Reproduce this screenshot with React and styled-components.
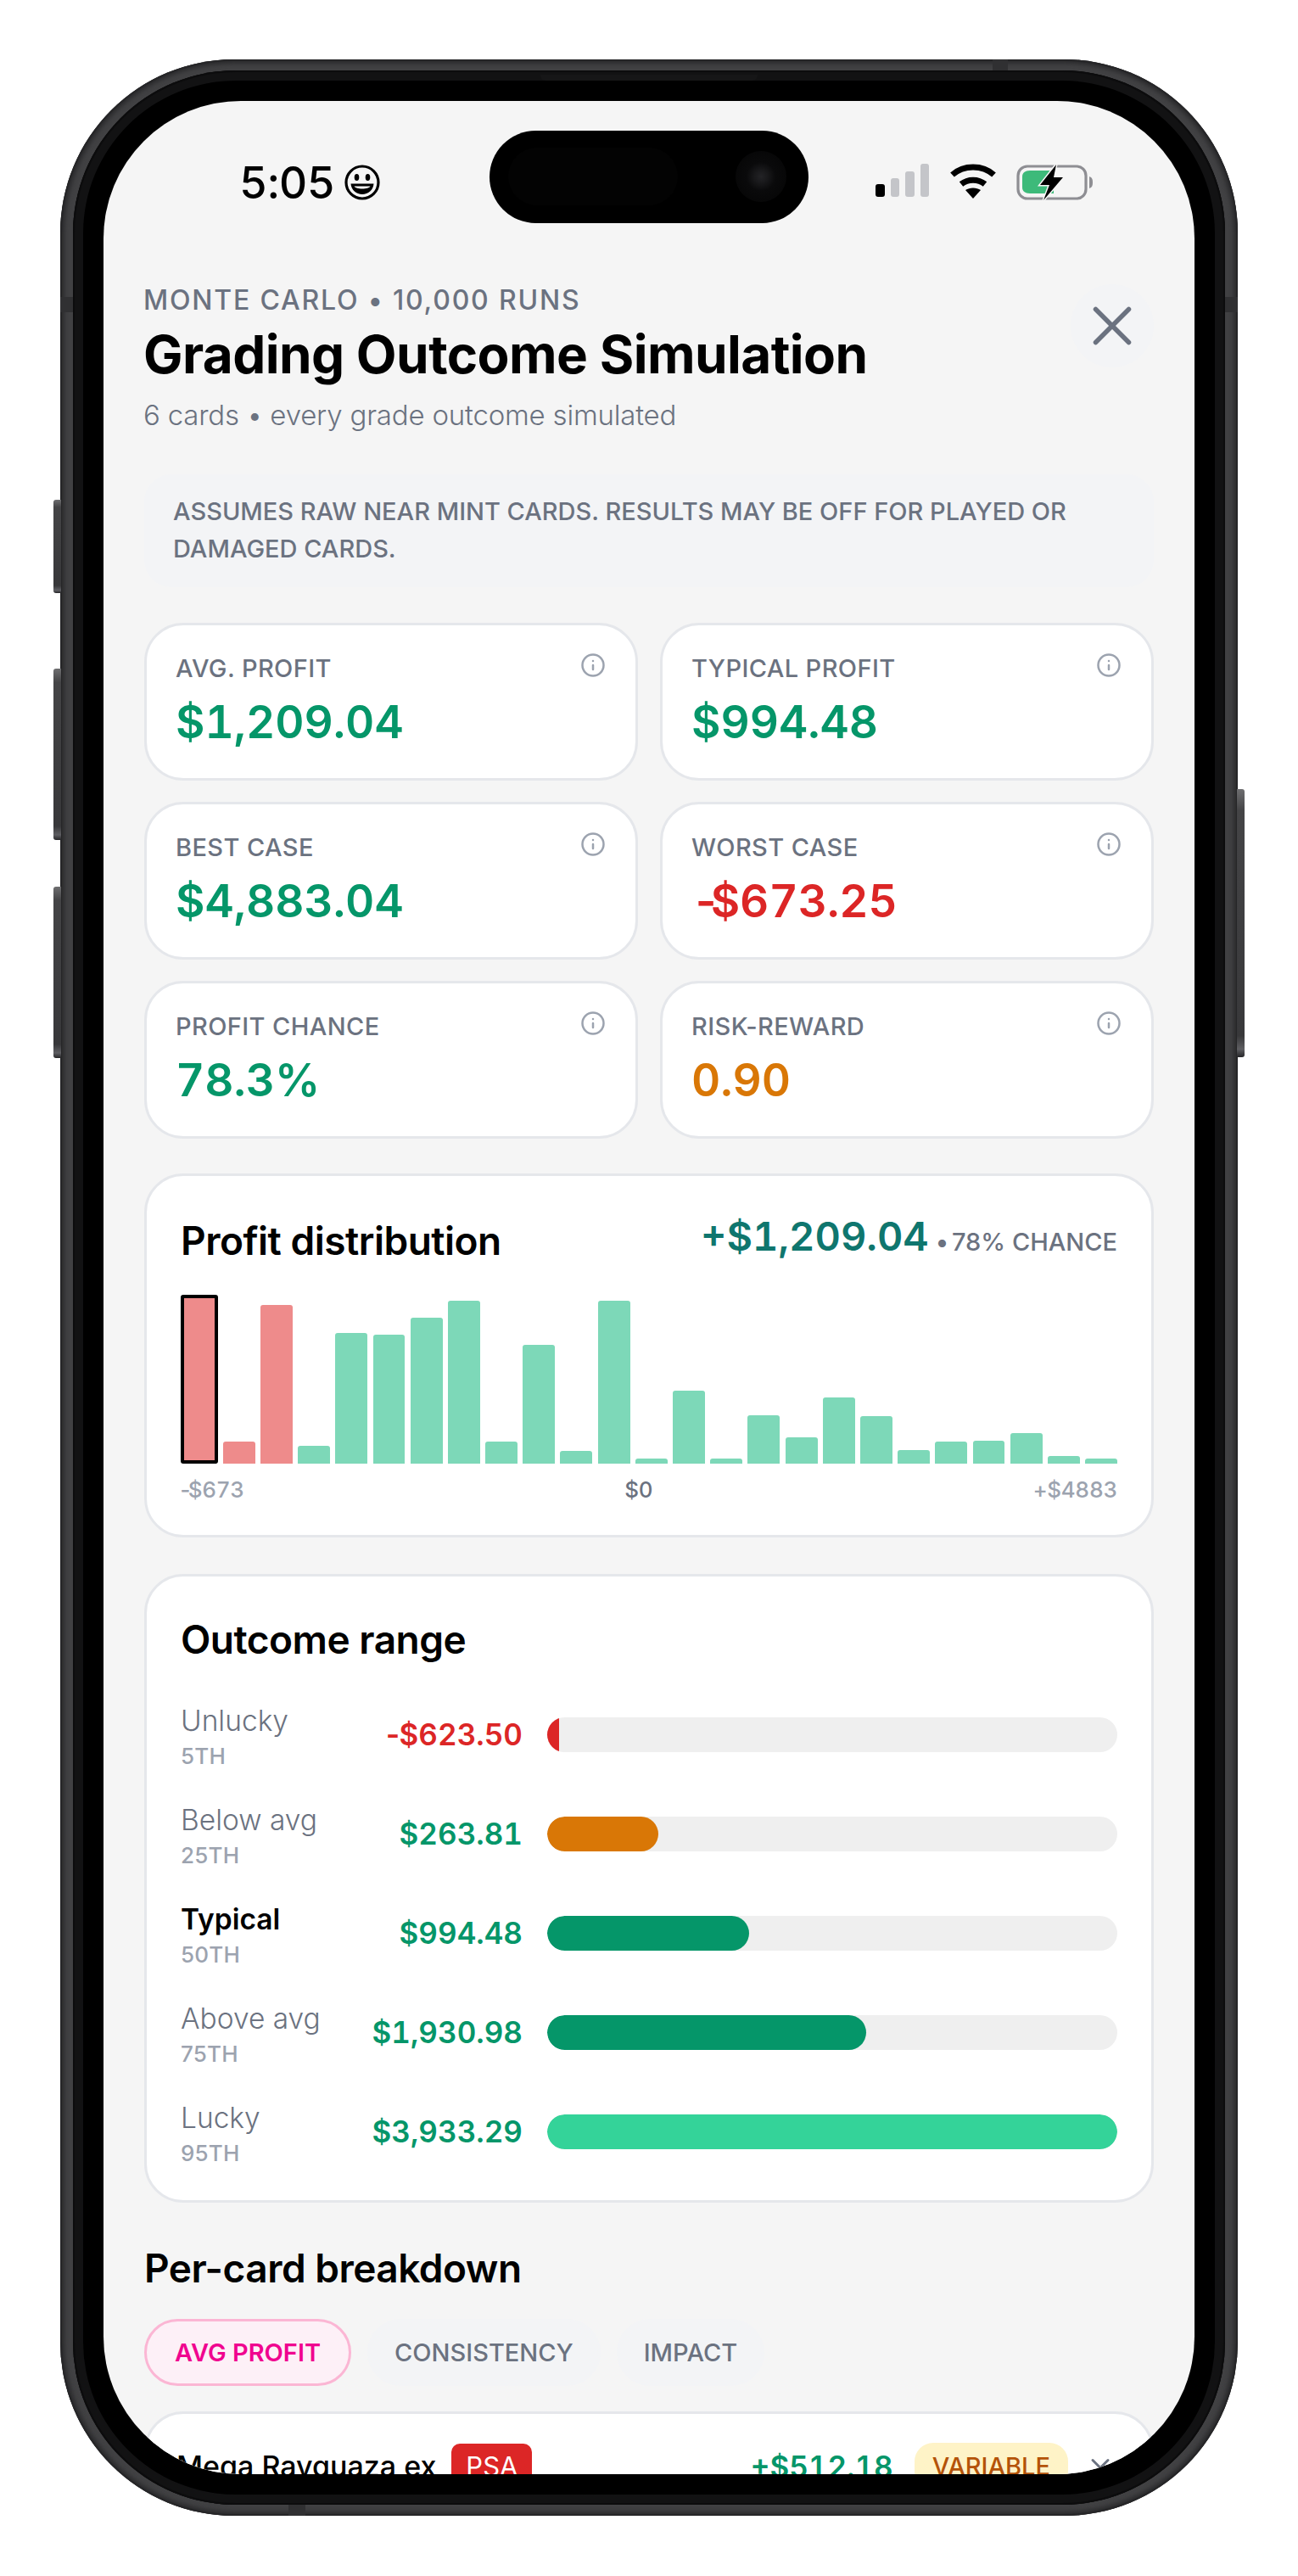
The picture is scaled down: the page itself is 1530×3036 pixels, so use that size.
import React from "react";
import styled, { createGlobalStyle } from "styled-components";
import { X, Info, ChevronDown } from "lucide-react";

const GlobalStyle = createGlobalStyle`
  html, body {
    margin: 0;
    background: #ffffff;
  }
  * {
    box-sizing: border-box;
  }
`

const Page = styled.div`
  width: 1530px;
  height: 3036px;
  padding: 70px 0 0 71px;
  background: #ffffff;
  font-family: Inter, "Liberation Sans", sans-serif;
  overflow: hidden;
`
const Phone = styled.div`
  position: relative;
  width: 1388px;
  height: 2895px;
  padding: 13px 15px;
  border-radius: 205px;
  background: #414143;
  box-shadow: inset 0 0 0 2px #262628, inset 0 0 5px 5px #2b2b2d;
`
const Bezel = styled.div`
  width: 100%;
  height: 100%;
  padding: 36px;
  border-radius: 192px;
  background: #000000;
  box-shadow: inset 0 0 0 2px #0c0c0d, inset 0 0 0 12px #121213;
`
const Band = styled.span`
  position: absolute;
  background: #303032;
  ${props => props.side === "top" && `top: 0; left: 1099px; width: 18px; height: 13px;`}
  ${props => props.side === "bottom" && `bottom: 0; left: 269px; width: 20px; height: 13px;`}
  ${props => props.side === "left" && `left: 0; top: 280px; width: 15px; height: 18px;`}
  ${props => props.side === "right" && `right: 0; top: 280px; width: 15px; height: 18px;`}
`
const Speaker = styled.span`
  position: absolute;
  top: 18px;
  left: 566px;
  width: 256px;
  height: 7px;
  border-radius: 0 0 6px 6px;
  background: #161617;
`
const SideButton = styled.span`
  position: absolute;
  top: ${props => props.top}px;
  height: ${props => props.height}px;
  width: 9px;
  background: linear-gradient(180deg, #6e6e70 0, #444446 8%, #38383a 92%, #5e5e62 97%, #262628 100%);
  ${props => props.right ? `right: -8px; border-radius: 0 3px 3px 0;` : `left: -8px; border-radius: 3px 0 0 3px;`}
`
const Screen = styled.div`
  width: 100%;
  height: 100%;
  border-radius: 162px;
  background: #f5f5f5;
  overflow: hidden;
`
const StatusBar = styled.div`
  display: grid;
  grid-template-columns: 455px 376px 1fr;
  padding-top: 35px;
  height: 144px;
`
const StatusLeft = styled.div`
  display: flex;
  align-items: center;
  gap: 11px;
  padding-left: 160px;
  height: 109px;
  padding-top: 13px;
`
const Time = styled.span`
  font-size: 52px;
  font-weight: 500;
  font-variant-numeric: tabular-nums;
  letter-spacing: -0.5px;
  color: #000000;
`
const Island = styled.div`
  position: relative;
  height: 109px;
  border-radius: 55px;
  background: #000000;
`
const IslandInner = styled.span`
  position: absolute;
  top: 20px;
  left: 22px;
  width: 200px;
  height: 68px;
  border-radius: 34px;
  background: #030303;
`
const Camera = styled.span`
  position: absolute;
  top: 24px;
  right: 26px;
  width: 60px;
  height: 60px;
  border-radius: 50%;
  background: radial-gradient(circle, #232326 0, #19191b 18%, #0a0a0b 40%, #040404 100%);
`
const StatusRight = styled.div`
  display: flex;
  align-items: flex-start;
  justify-content: flex-end;
  padding: 39px 119px 0 0;
  gap: 23px;
`
const Content = styled.div`
  padding: 0 48px 0;
`
const Header = styled.div`
  display: flex;
  justify-content: space-between;
  align-items: flex-start;
  margin-top: 72px;
`
const Eyebrow = styled.div`
  margin-left: -1px;
  font-size: 32px;
  line-height: 38px;
  font-weight: 500;
  letter-spacing: 1.8px;
  color: #6b7280;
`
const Title = styled.h1`
  margin: 7px 0 0 -1px;
  font-size: 62px;
  line-height: 75px;
  font-weight: 700;
  letter-spacing: -0.55px;
  color: #000000;
`
const Subtitle = styled.div`
  margin: 14px 0 0 -1px;
  font-size: 33px;
  line-height: 40px;
  font-weight: 300;
  letter-spacing: -0.2px;
  color: #6b7280;
`
const CloseButton = styled.button`
  display: flex;
  align-items: center;
  justify-content: center;
  width: 98px;
  height: 98px;
  padding: 0;
  border: 0;
  border-radius: 50%;
  background: #f3f4f6;
  color: #6b7280;
`
const Banner = styled.div`
  margin-top: 50px;
  padding: 22px 34px 23px;
  border-radius: 32px;
  background: #f3f4f6;
  font-size: 29px;
  line-height: 44px;
  font-weight: 500;
  color: #6b7280;
`
const MetricGrid = styled.div`
  display: grid;
  grid-template-columns: 1fr 1fr;
  gap: 25px 26px;
  margin-top: 42px;
`
const MetricCard = styled.div`
  position: relative;
  height: 186px;
  padding: 33px 34px;
  border: 3px solid #e5e7eb;
  border-radius: 46px;
  background: #ffffff;
`
const MetricLabel = styled.div`
  font-size: 29px;
  line-height: 36px;
  font-weight: 500;
  letter-spacing: 0.4px;
  color: #6b7280;
`
const MetricValue = styled.div`
  margin-top: 13px;
  font-size: 53px;
  line-height: 64px;
  font-weight: 600;
  font-variant-numeric: tabular-nums;
  color: ${props => props.color};
`
const Minus = styled.span`
  letter-spacing: ${props => props.tight}em;
`
const InfoIcon = styled.span`
  position: absolute;
  top: 32px;
  right: 35px;
  display: flex;
  color: #9ca3af;
`
const Panel = styled.div`
  margin-top: ${props => props.top}px;
  padding: 46px 40px 0;
  height: ${props => props.height}px;
  border: 3px solid #e5e7eb;
  border-radius: 46px;
  background: #ffffff;
`
const PanelHead = styled.div`
  display: flex;
  justify-content: space-between;
  align-items: center;
`
const PanelTitle = styled.h2`
  margin: 0;
  font-size: 46px;
  line-height: 56px;
  font-weight: 600;
  letter-spacing: -0.5px;
  color: #000000;
`
const ChartHeadTitle = styled(PanelTitle)`
  padding-top: 2px;
`
const ChartSummary = styled.div`
  display: flex;
  align-items: baseline;
  gap: 8px;
  margin-top: -10px;
`
const SummaryValue = styled.span`
  font-size: 47px;
  font-weight: 600;
  font-variant-numeric: tabular-nums;
  color: #0f766e;
`
const SummaryDot = styled.span`
  margin-right: -4px;
`
const SummaryNote = styled.span`
  font-size: 29px;
  font-weight: 500;
  color: #6b7280;
`
const Bars = styled.div`
  display: flex;
  align-items: flex-end;
  gap: 6.3px;
  height: 199px;
  margin-top: 36px;
`
const Bar = styled.div`
  flex: ${props => props.selected ? "0 0 43.5px" : "1 1 0"};
  border-radius: 3px 3px 0 0;
  background: ${props => props.loss ? "#ee8b8b" : "#7dd8b8"};
  ${props => props.selected ? `border: 4px solid #000000; border-radius: 3px;` : ``}
`
const Axis = styled.div`
  display: flex;
  justify-content: space-between;
  margin: 14px 0 0 -3px;
  font-size: 26px;
  line-height: 34px;
  font-weight: 500;
  letter-spacing: -0.3px;
  font-variant-numeric: tabular-nums;
  color: #9ca3af;
`
const AxisMid = styled.span`
  color: #6b7280;
`
const RangeList = styled.div`
  display: flex;
  flex-direction: column;
  gap: 35px;
  margin-top: 39px;
`
const RangeRow = styled.div`
  display: grid;
  grid-template-columns: 401px 672px;
  align-items: center;
  column-gap: 31px;
  height: 82px;
`
const RangeInfo = styled.div`
  display: flex;
  justify-content: space-between;
  align-items: center;
`
const RangeText = styled.div`
  padding-top: 7px;
`
const RangeName = styled.div`
  font-size: 33.5px;
  line-height: 44px;
  font-weight: ${props => props.strong ? 600 : 300};
  color: ${props => props.strong ? "#000000" : "#6b7280"};
`
const RangeRank = styled.div`
  font-size: 26px;
  line-height: 39px;
  font-weight: 500;
  letter-spacing: 0.2px;
  color: #9ca3af;
`
const RangeValue = styled.div`
  margin-right: -2px;
  font-size: 35px;
  font-weight: 600;
  font-variant-numeric: tabular-nums;
  color: ${props => props.color};
`
const Track = styled.div`
  height: 41px;
  border-radius: 21px;
  background: #efefef;
  overflow: hidden;
`
const Fill = styled.div`
  height: 100%;
  border-radius: ${props => props.flat ? "21px 0 0 21px" : "21px"};
  background: ${props => props.color};
`
const SectionTitle = styled(PanelTitle)`
  margin-top: 49px;
`
const Tabs = styled.div`
  display: flex;
  gap: 19px;
  margin-top: 32px;
`
const Tab = styled.div`
  display: flex;
  align-items: center;
  height: 79px;
  padding: 0 ${props => props.active ? 33 : 29}px;
  border: 3px solid ${props => props.active ? "#fbb6d4" : "#f3f4f6"};
  border-radius: 40px;
  background: ${props => props.active ? "#fdf0f7" : "#f3f4f6"};
  font-size: 29px;
  font-weight: ${props => props.active ? 600 : 500};
  color: ${props => props.active ? "#f0048f" : "#6b7280"};
`
const BreakdownCard = styled.div`
  margin-top: 30px;
  padding: 34px 35px;
  height: 200px;
  border: 3px solid #e5e7eb;
  border-radius: 46px;
  background: #ffffff;
`
const BreakdownRow = styled.div`
  display: flex;
  align-items: center;
`
const CardName = styled.span`
  font-size: 34px;
  font-weight: 500;
  color: #000000;
`
const GradeBadge = styled.span`
  margin-left: 18px;
  padding: 8px 17px;
  border-radius: 10px;
  background: #dc2626;
  font-size: 31px;
  font-weight: 400;
  color: #ffffff;
`
const CardValue = styled.span`
  margin-left: auto;
  font-size: 35px;
  font-weight: 600;
  font-variant-numeric: tabular-nums;
  color: #059669;
`
const VerdictBadge = styled.span`
  margin-left: 25px;
  padding: 10px 21px;
  border-radius: 22px;
  background: #fef3c7;
  font-size: 29px;
  font-weight: 500;
  color: #b45309;
`
const Chevron = styled.span`
  display: flex;
  margin: -5px 7px 0 20px;
  color: #6b7280;
`

const METRICS = [
  { label: "AVG. PROFIT", value: "$1,209.04", color: "#059669" },
  { label: "TYPICAL PROFIT", value: "$994.48", color: "#059669" },
  { label: "BEST CASE", value: "$4,883.04", color: "#059669" },
  { label: "WORST CASE", value: "$673.25", negative: true, color: "#dc2626" },
  { label: "PROFIT CHANCE", value: "78.3%", color: "#059669" },
  { label: "RISK-REWARD", value: "0.90", color: "#d97706" },
]

const BAR_HEIGHTS = [199, 26, 187, 21, 154, 152, 172, 192, 26, 140, 15, 192, 6, 86, 6, 57, 31, 78, 56, 16, 26, 27, 36, 9, 6]

const RANGES = [
  { name: "Unlucky", rank: "5TH", value: "$623.50", negative: true, valueColor: "#dc2626", fill: "#dc2626", width: 14, flat: true },
  { name: "Below avg", rank: "25TH", value: "$263.81", valueColor: "#059669", fill: "#d97706", width: 131 },
  { name: "Typical", rank: "50TH", value: "$994.48", valueColor: "#059669", fill: "#059669", width: 238, strong: true },
  { name: "Above avg", rank: "75TH", value: "$1,930.98", valueColor: "#059669", fill: "#059669", width: 376 },
  { name: "Lucky", rank: "95TH", value: "$3,933.29", valueColor: "#059669", fill: "#34d399", width: 672 },
]

function Smiley () {
  return (
    <svg width="42" height="42" viewBox="0 0 42 42">
      <circle cx="21" cy="21" r="19" fill="none" stroke="#000" strokeWidth="3.2" />
      <ellipse cx="14.5" cy="15" rx="2.8" ry="4" fill="#000" />
      <ellipse cx="27.5" cy="15" rx="2.8" ry="4" fill="#000" />
      <path d="M7.5 22.5 H34.5 C34 30 28 35 21 35 C14 35 8 30 7.5 22.5 Z" fill="#000" />
      <path d="M11.5 25.5 H30.5 C29.5 27.5 25.5 28.5 21 28.5 C16.5 28.5 12.5 27.5 11.5 25.5 Z" fill="#f5f5f5" />
    </svg>
  )
}

function Signal () {
  return (
    <svg width="64" height="40" viewBox="0 0 64 40">
      <rect x="0" y="24" width="11" height="15" rx="3" fill="#000" />
      <rect x="18" y="17" width="10" height="22" rx="3" fill="#c4c5c9" />
      <rect x="35" y="9" width="11" height="30" rx="3" fill="#c4c5c9" />
      <rect x="53" y="0" width="10" height="39" rx="3" fill="#c4c5c9" />
    </svg>
  )
}

function Wifi () {
  return (
    <svg width="56" height="42" viewBox="0 0 56 42">
      <path d="M3.5 13 C17 1 39 1 52.5 13" fill="none" stroke="#000" strokeWidth="7" strokeLinejoin="round" />
      <path d="M14 24 C22 17.5 34 17.5 42 24" fill="none" stroke="#000" strokeWidth="7" />
      <path d="M28 41 L19 31 C24 27.5 32 27.5 37 31 Z" fill="#000" />
    </svg>
  )
}

function Battery () {
  return (
    <svg width="91" height="44" viewBox="0 0 91 44">
      <rect x="2" y="3" width="80" height="38" rx="11" fill="none" stroke="#8e8e93" strokeWidth="3.2" />
      <path d="M16 8 H44 V35 H16 C10 35 7 32 7 28 V15 C7 11 10 8 16 8 Z" fill="#3dba7a" />
      <path d="M86 15 C89 16 90 18 90 22 C90 26 89 28 86 29 Z" fill="#8e8e93" />
      <path d="M47 1 L28 25 H39 L32 43 L55 16 H44 Z" fill="#000" stroke="#f5f5f5" strokeWidth="3" paintOrder="stroke" />
    </svg>
  )
}

function App () {
  return (
    <Page>
      <GlobalStyle />
      <Phone>
        <SideButton top={519} height={110} />
        <SideButton top={718} height={202} />
        <SideButton top={975} height={202} />
        <SideButton right top={860} height={316} />
        <Band side="top" />
        <Band side="bottom" />
        <Band side="left" />
        <Band side="right" />
        <Speaker />
        <Bezel>
          <Screen>
            <StatusBar>
              <StatusLeft>
                <Time>5:05</Time>
                <Smiley />
              </StatusLeft>
              <Island>
                <IslandInner />
                <Camera />
              </Island>
              <StatusRight>
                <Signal />
                <Wifi />
                <Battery />
              </StatusRight>
            </StatusBar>
            <Content>
              <Header>
                <div>
                  <Eyebrow>MONTE CARLO • 10,000 RUNS</Eyebrow>
                  <Title>Grading Outcome Simulation</Title>
                  <Subtitle>6 cards • every grade outcome simulated</Subtitle>
                </div>
                <CloseButton>
                  <X size={78} strokeWidth={1.7} />
                </CloseButton>
              </Header>
              <Banner>ASSUMES RAW NEAR MINT CARDS. RESULTS MAY BE OFF FOR PLAYED OR DAMAGED CARDS.</Banner>
              <MetricGrid>
                {METRICS.map((item) => {
                  return (
                    <MetricCard key={item.label}>
                      <MetricLabel>{item.label}</MetricLabel>
                      <MetricValue color={item.color}>
                        {item.negative && <Minus tight={-0.22}>-</Minus>}
                        {item.value}
                      </MetricValue>
                      <InfoIcon><Info size={30} strokeWidth={2} /></InfoIcon>
                    </MetricCard>
                  )
                })}
              </MetricGrid>
              <Panel top={41} height={429}>
                <PanelHead>
                  <ChartHeadTitle>Profit distribution</ChartHeadTitle>
                  <ChartSummary>
                    <SummaryValue>+$1,209.04</SummaryValue>
                    <SummaryNote><SummaryDot>•</SummaryDot> 78% CHANCE</SummaryNote>
                  </ChartSummary>
                </PanelHead>
                <Bars>
                  {BAR_HEIGHTS.map((height, index) => {
                    return <Bar key={index} loss={index < 3} selected={index === 0} style={{ height }} />
                  })}
                </Bars>
                <Axis>
                  <span><Minus tight={-0.2}>-</Minus>$673</span>
                  <AxisMid>$0</AxisMid>
                  <span>+$4883</span>
                </Axis>
              </Panel>
              <Panel top={43} height={741}>
                <PanelTitle>Outcome range</PanelTitle>
                <RangeList>
                  {RANGES.map((item) => {
                    return (
                      <RangeRow key={item.rank}>
                        <RangeInfo>
                          <RangeText>
                            <RangeName strong={item.strong}>{item.name}</RangeName>
                            <RangeRank>{item.rank}</RangeRank>
                          </RangeText>
                          <RangeValue color={item.valueColor}>
                            {item.negative && <Minus tight={-0.11}>-</Minus>}
                            {item.value}
                          </RangeValue>
                        </RangeInfo>
                        <Track>
                          <Fill color={item.fill} flat={item.flat} style={{ width: item.width }} />
                        </Track>
                      </RangeRow>
                    )
                  })}
                </RangeList>
              </Panel>
              <SectionTitle>Per-card breakdown</SectionTitle>
              <Tabs>
                <Tab active>AVG PROFIT</Tab>
                <Tab>CONSISTENCY</Tab>
                <Tab>IMPACT</Tab>
              </Tabs>
              <BreakdownCard>
                <BreakdownRow>
                  <CardName>Mega Rayquaza ex</CardName>
                  <GradeBadge>PSA</GradeBadge>
                  <CardValue>+$512.18</CardValue>
                  <VerdictBadge>VARIABLE</VerdictBadge>
                  <Chevron><ChevronDown size={36} /></Chevron>
                </BreakdownRow>
              </BreakdownCard>
            </Content>
          </Screen>
        </Bezel>
      </Phone>
    </Page>
  )
}

export default App;
